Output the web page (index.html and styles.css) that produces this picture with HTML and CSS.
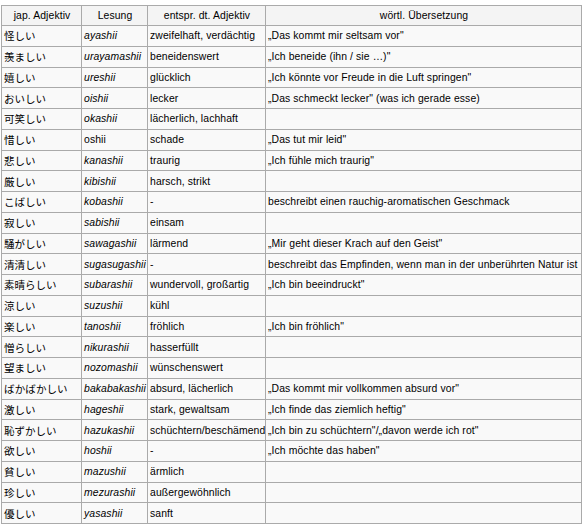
FILE: index.html
```html
<!DOCTYPE html>
<html lang="de">
<head>
<meta charset="utf-8">
<title>Adjektive auf -shii</title>
<link rel="stylesheet" href="styles.css">
</head>
<body>
<table class="wikitable">
<colgroup>
<col class="c1"><col class="c2"><col class="c3"><col class="c4">
</colgroup>
<thead>
<tr><th>jap. Adjektiv</th><th>Lesung</th><th>entspr. dt. Adjektiv</th><th>wörtl. Übersetzung</th></tr>
</thead>
<tbody>
<tr><td lang="ja">怪しい</td><td><i>ayashii</i></td><td>zweifelhaft, verdächtig</td><td>„Das kommt mir seltsam vor"</td></tr>
<tr><td lang="ja">羨ましい</td><td><i>urayamashii</i></td><td>beneidenswert</td><td>„Ich beneide (ihn / sie …)"</td></tr>
<tr><td lang="ja">嬉しい</td><td><i>ureshii</i></td><td>glücklich</td><td>„Ich könnte vor Freude in die Luft springen"</td></tr>
<tr><td lang="ja">おいしい</td><td><i>oishii</i></td><td>lecker</td><td>„Das schmeckt lecker" (was ich gerade esse)</td></tr>
<tr><td lang="ja">可笑しい</td><td><i>okashii</i></td><td>lächerlich, lachhaft</td><td></td></tr>
<tr><td lang="ja">惜しい</td><td>oshii</td><td>schade</td><td>„Das tut mir leid"</td></tr>
<tr><td lang="ja">悲しい</td><td><i>kanashii</i></td><td>traurig</td><td>„Ich fühle mich traurig"</td></tr>
<tr><td lang="ja">厳しい</td><td><i>kibishii</i></td><td>harsch, strikt</td><td></td></tr>
<tr><td lang="ja">こばしい</td><td><i>kobashii</i></td><td>-</td><td>beschreibt einen rauchig-aromatischen Geschmack</td></tr>
<tr><td lang="ja">寂しい</td><td><i>sabishii</i></td><td>einsam</td><td></td></tr>
<tr><td lang="ja">騒がしい</td><td><i>sawagashii</i></td><td>lärmend</td><td>„Mir geht dieser Krach auf den Geist"</td></tr>
<tr><td lang="ja">清清しい</td><td><i>sugasugashii</i></td><td>-</td><td>beschreibt das Empfinden, wenn man in der unberührten Natur ist</td></tr>
<tr><td lang="ja">素晴らしい</td><td><i>subarashii</i></td><td>wundervoll, großartig</td><td>„Ich bin beeindruckt"</td></tr>
<tr><td lang="ja">涼しい</td><td><i>suzushii</i></td><td>kühl</td><td></td></tr>
<tr><td lang="ja">楽しい</td><td><i>tanoshii</i></td><td>fröhlich</td><td>„Ich bin fröhlich"</td></tr>
<tr><td lang="ja">憎らしい</td><td><i>nikurashii</i></td><td>hasserfüllt</td><td></td></tr>
<tr><td lang="ja">望ましい</td><td><i>nozomashii</i></td><td>wünschenswert</td><td></td></tr>
<tr><td lang="ja">ばかばかしい</td><td><i>bakabakashii</i></td><td>absurd, lächerlich</td><td>„Das kommt mir vollkommen absurd vor"</td></tr>
<tr><td lang="ja">激しい</td><td><i>hageshii</i></td><td>stark, gewaltsam</td><td>„Ich finde das ziemlich heftig"</td></tr>
<tr><td lang="ja">恥ずかしい</td><td><i>hazukashii</i></td><td>schüchtern/beschämend</td><td>„Ich bin zu schüchtern"/„davon werde ich rot"</td></tr>
<tr><td lang="ja">欲しい</td><td><i>hoshii</i></td><td>-</td><td>„Ich möchte das haben"</td></tr>
<tr><td lang="ja">貧しい</td><td><i>mazushii</i></td><td>ärmlich</td><td></td></tr>
<tr><td lang="ja">珍しい</td><td><i>mezurashii</i></td><td>außergewöhnlich</td><td></td></tr>
<tr><td lang="ja">優しい</td><td><i>yasashii</i></td><td>sanft</td><td></td></tr>
</tbody>
</table>
</body>
</html>
```

FILE: styles.css
```css
html, body {
  margin: 0;
  padding: 0;
  background: #fff;
}
body {
  padding: 5px 0 0 1px;
  font-family: "Liberation Sans", "Noto Sans CJK JP", sans-serif;
  font-size: 10.4px;
  letter-spacing: 0.1px;
  color: #000;
}
.wikitable {
  border-collapse: collapse;
  table-layout: fixed;
  width: 580px;
  background: #f9f9f9;
  border: 1px solid #aaa;
}
.c1 { width: 80px; }
.c2 { width: 66px; }
.c3 { width: 118px; }
.c4 { width: 316px; }
.wikitable th,
.wikitable td {
  border: 1px solid #aaa;
  padding: 0 1px 0 2px;
  white-space: nowrap;
  overflow: hidden;
  vertical-align: middle;
  text-align: left;
  line-height: 13px;
}
.wikitable th {
  font-weight: normal;
  text-align: center;
  background: #f4f4f4;
  height: 20px;
  box-sizing: border-box;
}
.wikitable tbody tr {
  height: 20.75px;
}
.wikitable td:first-child {
  font-family: "Noto Sans CJK JP", sans-serif;
  font-size: 10.5px;
  letter-spacing: 0;
}
```
